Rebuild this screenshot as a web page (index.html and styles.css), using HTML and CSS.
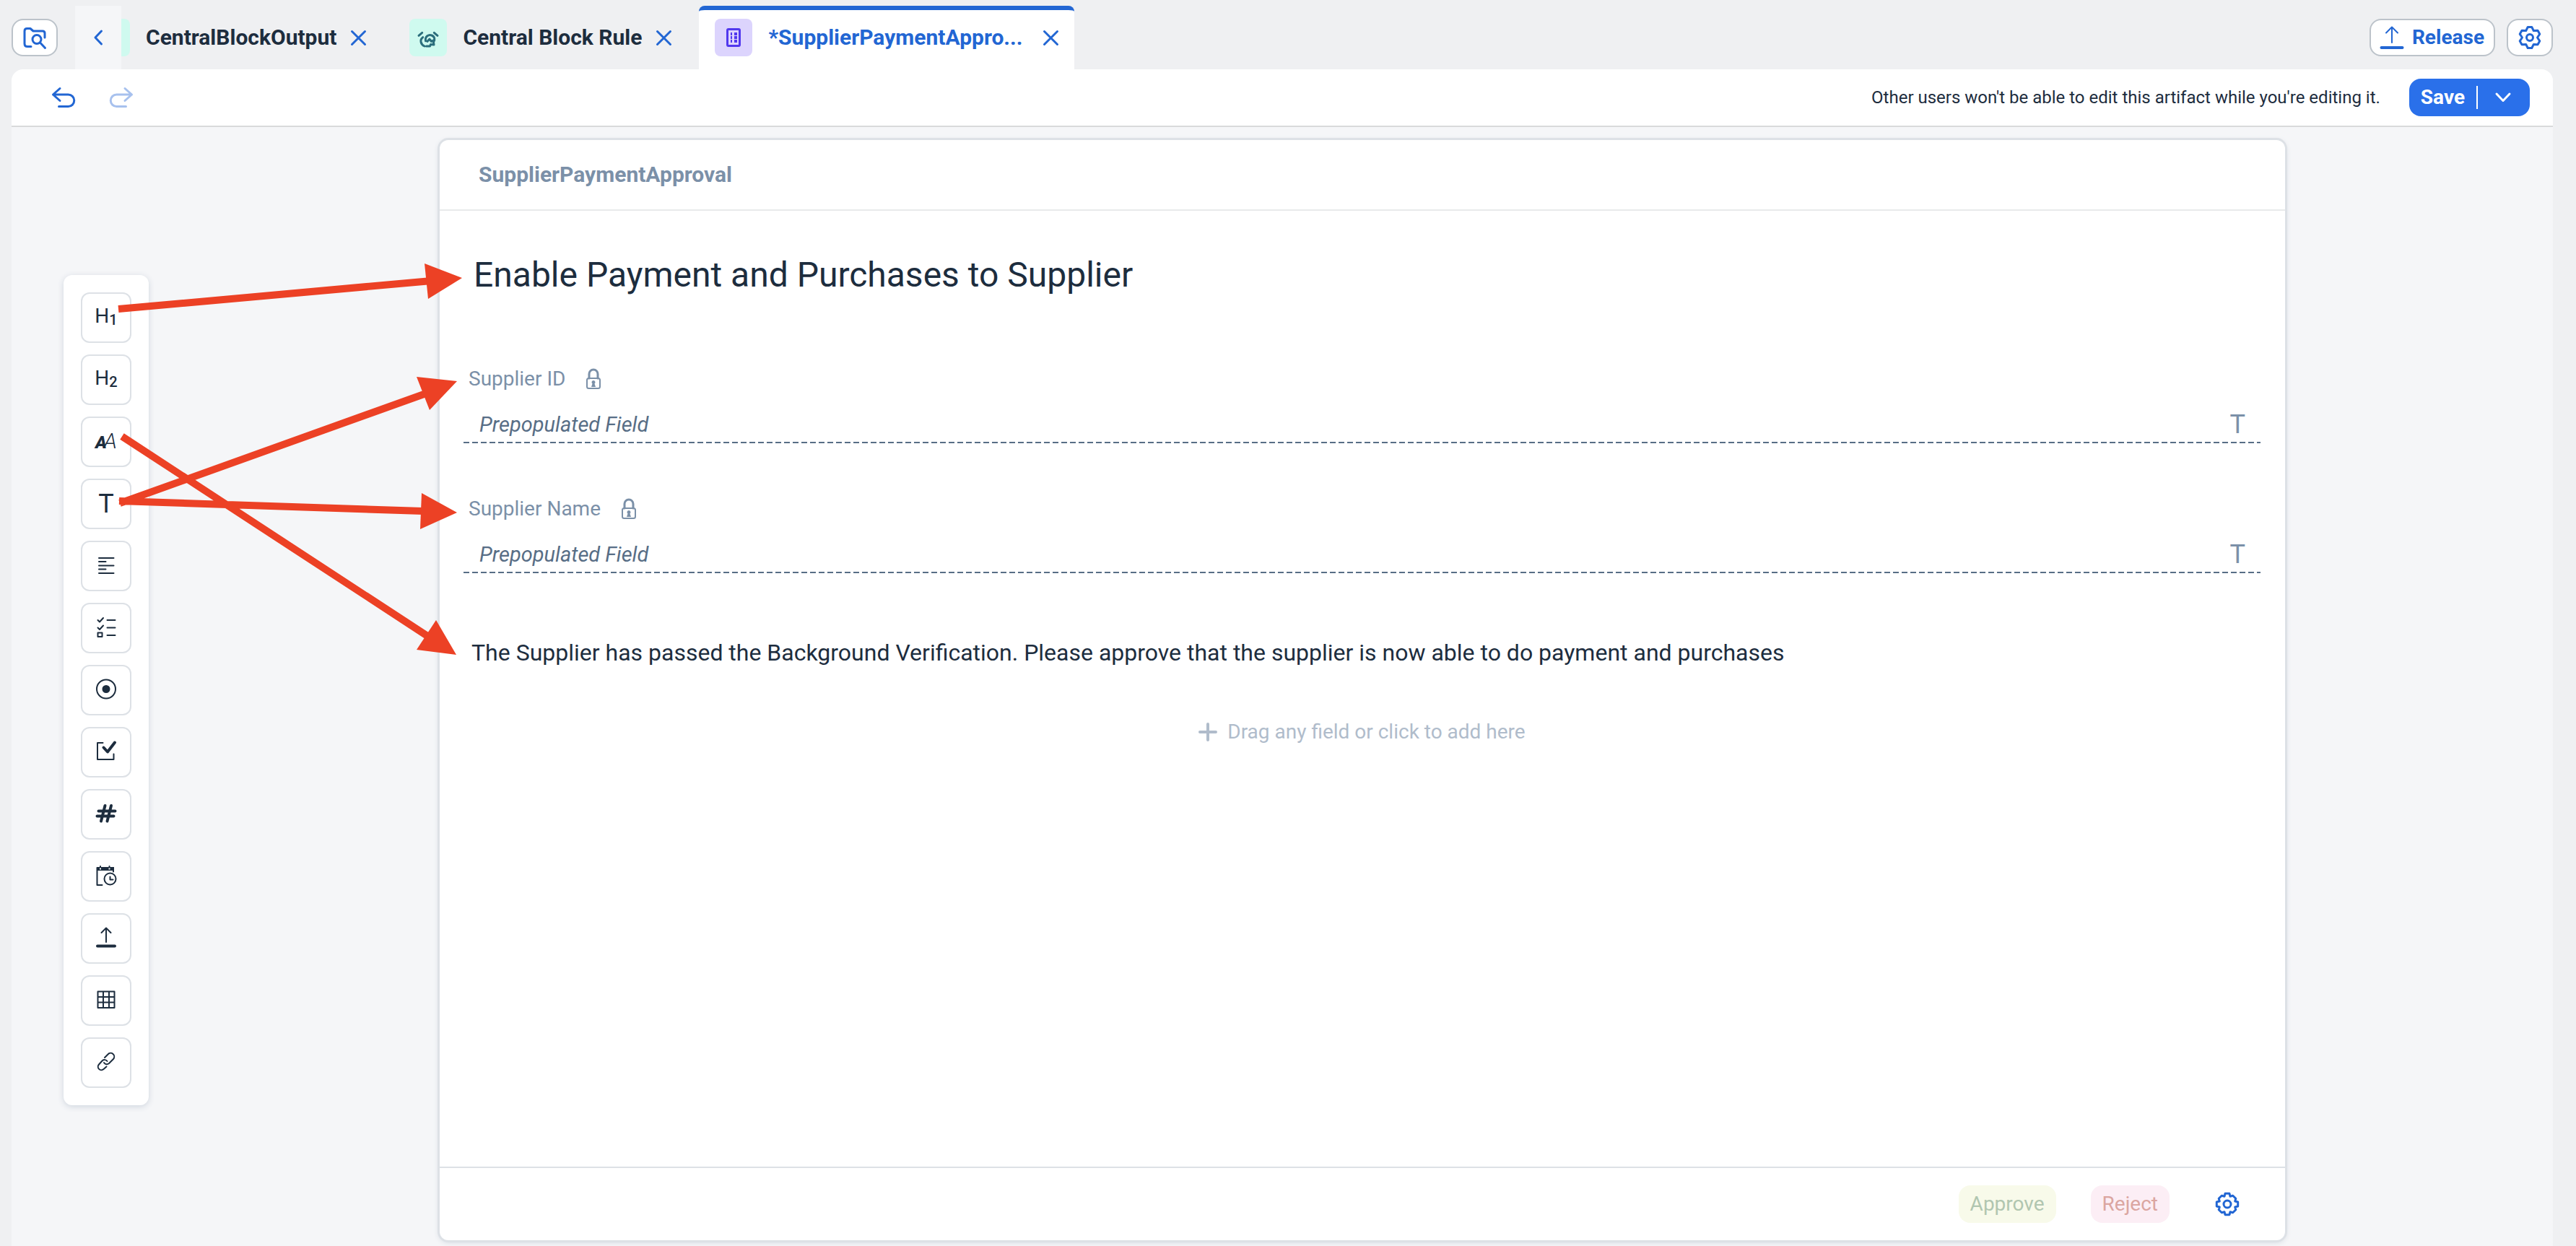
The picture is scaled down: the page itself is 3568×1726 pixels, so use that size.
FILE: index.html
```html
<!DOCTYPE html>
<html lang="en">
<head>
<meta charset="utf-8">
<title>SupplierPaymentApproval</title>
<meta name="viewport" content="width=device-width, initial-scale=1">
<link rel="stylesheet" href="styles.css">
</head>
<body>
<header class="tabbar">
  <button class="box-btn square" aria-label="Browse artifacts">
    <svg class="icon32" viewBox="0 0 32 32"><path d="M11 28.5H6Q2 28.5 2 24.5V7Q2 3.5 5.5 3.5H10L14 7H27Q30 7 30 10V16"/><circle cx="19" cy="18.5" r="6"/><path d="M23.5 23L30.500 30.500"/></svg>
  </button>
  <button class="scroll-btn" aria-label="Previous tabs">
    <svg class="icon32" viewBox="0 0 32 32"><path d="M20.500 7L12 16L20.500 25"/></svg>
  </button>
  <nav class="tabs" aria-label="Open artifacts">
    <div class="tab tab-cut">
      <span class="chip mint chip-cut"></span>
      <a class="tab-label" href="#output">CentralBlockOutput</a>
      <button class="close" aria-label="Close CentralBlockOutput"><svg viewBox="0 0 21 21"><path d="M1.500 1.500L19.500 19.500M19.500 1.500L1.500 19.500"/></svg></button>
    </div>
    <div class="tab">
      <span class="chip mint"><svg class="icon28" viewBox="0 0 28 28"><path d="M1 11.300L5.700 7.300M22.300 7.300L27 11.300M6.700 13.700C2 17 3.500 23.500 9 26M10.500 18.700C9.500 12 15 9.500 19 11C23 12.500 24 17 21.500 20.500L22 24L17.500 23.500L16.500 26H11.500M12.800 19.300L16 16.200L18.500 19.500L21 18"/></svg></span>
      <a class="tab-label" href="#rule">Central Block Rule</a>
      <button class="close" aria-label="Close Central Block Rule"><svg viewBox="0 0 21 21"><path d="M1.500 1.500L19.500 19.500M19.500 1.500L1.500 19.500"/></svg></button>
    </div>
    <div class="tab active">
      <span class="chip violet"><svg class="icon28" viewBox="0 0 28 28"><rect x="5.500" y="2.500" width="17" height="23" rx="1.500"/><path class="dots" d="M10 9h2M15 9h4M10 14h2M15 14h4M10 19h2M15 19h4"/></svg></span>
      <a class="tab-label" href="#approval" aria-current="page">*SupplierPaymentAppro...</a>
      <button class="close" aria-label="Close SupplierPaymentApproval"><svg viewBox="0 0 21 21"><path d="M1.500 1.500L19.500 19.500M19.500 1.500L1.500 19.500"/></svg></button>
    </div>
  </nav>
  <div class="tabbar-actions">
    <button class="box-btn release">
      <svg class="icon32" viewBox="0 0 32 32"><path d="M16 23V2M8 9.500L16 1.500L24 9.500"/><path class="thick" d="M1.500 30H30.500"/></svg>
      Release
    </button>
    <button class="box-btn square" aria-label="Settings">
      <svg class="icon32" viewBox="0 0 32 32"><path d="M13.200 1.500H18.800L21.300 6.600L27 6.300L29.800 11.200L26.500 16L29.800 20.800L27 25.700L21.300 25.400L18.800 30.500H13.200L10.700 25.400L5 25.700L2.200 20.800L5.500 16L2.200 11.200L5 6.300L10.700 6.600Z"/><circle cx="16" cy="16" r="4.500"/></svg>
    </button>
  </div>
</header>

<main class="editor">
  <div class="toolbar">
    <button class="flat" aria-label="Undo"><svg class="icon32" viewBox="0 0 32 32"><path d="M11 3.500L1.500 12L11 20.500M1.500 12H22.500A8 8 0 0 1 22.500 28.500H9.500"/></svg></button>
    <button class="flat" aria-label="Redo" disabled><svg class="icon32" viewBox="0 0 32 32"><path d="M21 3.500L30.500 12L21 20.500M30.500 12H9.500A8 8 0 0 0 9.500 28.500H22.500"/></svg></button>
    <p class="lock-note">Other users won't be able to edit this artifact while you're editing it.</p>
    <div class="save">
      <button class="save-main">Save</button>
      <button class="save-more" aria-label="More save options"><svg viewBox="0 0 22 14"><path d="M2 2L11 11.500L20 2"/></svg></button>
    </div>
  </div>

  <div class="workspace">
    <aside class="palette" aria-label="Form fields">
      <button aria-label="Heading 1"><span class="glyph-h">H<b>1</b></span></button>
      <button aria-label="Heading 2"><span class="glyph-h">H<b>2</b></span></button>
      <button aria-label="Paragraph"><span class="glyph-a"><b>A</b><i>A</i></span></button>
      <button aria-label="Text"><span class="glyph-t">T</span></button>
      <button aria-label="Text area"><svg class="icon28" viewBox="0 0 28 28"><path d="M4 3H24.500M4 8H13.500M4 13.500H24.500M4 18.500H13.500M4 24H24.500"/></svg></button>
      <button aria-label="Choice"><svg class="icon28" viewBox="0 0 28 28"><path d="M2.500 3L5 5.500L10 0M2.500 13.500L5 16L10 10.500M15.500 3H26.500M15.500 13.500H26.500M15.500 24H26.500"/><path d="M2.500 20.500H8.500V26H2.500Z"/></svg></button>
      <button aria-label="Radio button"><svg class="icon28" viewBox="0 0 28 28"><circle cx="14" cy="12.500" r="13"/><circle class="solid" cx="14" cy="12.500" r="4.500"/></svg></button>
      <button aria-label="Checkbox"><svg class="icon28" viewBox="0 0 28 28"><path d="M9.500 1H2V24H24.500V16.500"/><path class="heavy" d="M10.500 7.500L16 13.500L26 .500"/></svg></button>
      <button aria-label="Number"><svg class="icon28" viewBox="0 0 28 28"><path class="heavy" d="M12.500 2L7 23.500M21 2L15.500 23.500M3.500 9.500H26.500M1.500 16.500H24.500"/></svg></button>
      <button aria-label="Date and time"><svg class="icon28" viewBox="0 0 28 28"><path d="M8.500 26H1.500V2H24V7.500M6 0V2M18.500 0V2"/><path class="band" d="M1 1H25V6H1Z"/><path class="pin" d="M6 2.500V4.500M18.500 2.500V4.500"/><circle cx="19.500" cy="17.500" r="8"/><path d="M19.500 14.500V18.500H23.500"/></svg></button>
      <button aria-label="File upload"><svg class="icon28" viewBox="0 0 28 28"><path d="M14 19V0M7.500 6L14 -.500L20.500 6"/><path class="heavy" d="M2 24.500H26"/></svg></button>
      <button aria-label="Table"><svg class="icon28" viewBox="0 0 28 28"><path d="M2.500 1.500H25.500V24H2.500ZM10 1.500V24M18 1.500V24M2.500 9H25.500M2.500 16.500H25.500"/></svg></button>
      <button aria-label="Link"><svg class="icon28" viewBox="0 0 28 28"><path d="M12 7L16.500 2.500A4.600 4.600 0 0 1 24 9L18 15A4.600 4.600 0 0 1 11 14M15.500 12A4.600 4.600 0 0 0 9 11L4 16.500A4.600 4.600 0 0 0 10.500 23L14.500 19.500"/></svg></button>
    </aside>

    <section class="form-card">
      <h2 class="form-name">SupplierPaymentApproval</h2>
      <div class="form-body">
        <h1 class="heading">Enable Payment and Purchases to Supplier</h1>
        <div class="field">
          <label class="field-label" for="supplier-id">Supplier ID
            <svg class="lock" viewBox="0 0 22 30"><path d="M5 14V8A6 6 0 0 1 17 8V14"/><rect x="2" y="14" width="18" height="14" rx="2.500"/><path class="keyhole" d="M11 17a2.500 2.500 0 0 1 1.500 4.500L14 26H8L9.500 21.500A2.500 2.500 0 0 1 11 17Z"/></svg>
          </label>
          <div class="field-line"><input id="supplier-id" type="text" value="Prepopulated Field" readonly><span class="glyph-t">T</span></div>
        </div>
        <div class="field">
          <label class="field-label" for="supplier-name">Supplier Name
            <svg class="lock" viewBox="0 0 22 30"><path d="M5 14V8A6 6 0 0 1 17 8V14"/><rect x="2" y="14" width="18" height="14" rx="2.500"/><path class="keyhole" d="M11 17a2.500 2.500 0 0 1 1.500 4.500L14 26H8L9.500 21.500A2.500 2.500 0 0 1 11 17Z"/></svg>
          </label>
          <div class="field-line"><input id="supplier-name" type="text" value="Prepopulated Field" readonly><span class="glyph-t">T</span></div>
        </div>
        <p class="paragraph">The Supplier has passed the Background Verification. Please approve that the supplier is now able to do payment and purchases</p>
        <button class="add-field"><svg viewBox="0 0 26 26"><path d="M13 2V24M2 13H24"/></svg>Drag any field or click to add here</button>
      </div>
      <footer class="form-footer">
        <button class="decision approve" disabled>Approve</button>
        <button class="decision reject" disabled>Reject</button>
        <button class="footer-gear" aria-label="Form settings">
          <svg class="icon32" viewBox="0 0 32 32"><path d="M13 1.300H19L20 5.300L23.700 4.200L27.800 8.300L26.700 12L30.700 13V19L26.700 20L27.800 23.700L23.700 27.800L20 26.700L19 30.700H13L12 26.700L8.300 27.800L4.200 23.700L5.300 20L1.300 19V13L5.300 12L4.200 8.300L8.300 4.200L12 5.300Z"/><circle cx="16" cy="16" r="5"/></svg>
        </button>
      </footer>
    </section>
  </div>
</main>

<!-- Annotation arrows laid over the editor -->
<svg class="arrows" viewBox="0 0 700 940" aria-hidden="true">
  <path d="M164 428L592 389.500M166 697L590 545M165 694L586 708M169 604.500L592 881"/>
  <polygon points="588,365 640,385 593,414"/>
  <polygon points="577,522 633,528 595,568"/>
  <polygon points="584,683 633,710 582,733"/>
  <polygon points="604,859 632,907 577,900"/>
</svg>
</body>
</html>
```
FILE: styles.css
```css
:root {
  --ink: #1d2d3e;
  --blue: #2266d3;
  --line: #dde1e6;
  --muted: #7b90a8;
  --field: #586e86;
}

* { box-sizing: border-box; }

body {
  position: relative;
  display: flex;
  flex-direction: column;
  min-height: 100vh;
  margin: 0;
  background: #eff0f2;
  color: var(--ink);
  font: 28px/36px Roboto, "Liberation Sans", sans-serif;
}

h1, h2, p { margin: 0; }

button {
  display: flex;
  align-items: center;
  justify-content: center;
  padding: 0;
  border: 0;
  background: none;
  color: var(--blue);
  font: inherit;
  cursor: pointer;
}

svg {
  flex: none;
  overflow: visible;
  fill: none;
  stroke: currentColor;
  stroke-width: 3;
  stroke-linecap: round;
  stroke-linejoin: round;
}

.icon32 { width: 32px; height: 32px; }
.icon28 { width: 28px; height: 28px; }
.thick { stroke-width: 4; }

/* Tab bar */
.tabbar {
  display: flex;
  align-items: center;
  height: 96px;
  padding: 8px 32px 0 16px;
}

.box-btn {
  height: 52px;
  border: 2px solid #bcc3ca;
  border-radius: 16px;
  background: #fff;
  font-weight: 700;
}

.square { width: 64px; }
.release { gap: 12px; padding: 0 13px; }
.release .icon32 { stroke-width: 2; }
.release .thick { stroke-width: 4; }

.scroll-btn {
  width: 64px;
  height: 88px;
  margin-left: 24px;
  background: #f5f6f8;
}

.tabs { display: flex; flex: 1; gap: 16px; }

.tab {
  display: flex;
  align-items: center;
  height: 88px;
  padding: 0 22px;
}

.tab-cut { padding-left: 0; }

.chip {
  display: flex;
  align-items: center;
  justify-content: center;
  width: 52px;
  height: 52px;
  border-radius: 8px;
}

.chip-cut { width: 12px; border-radius: 0 8px 8px 0; }
.mint { background: #cffaef; color: #2b6e7c; }
.violet { background: #dcd4fd; color: #5138ee; }
.dots { stroke-linecap: butt; stroke-width: 4; }

.tab-label {
  margin: 0 20px 0 22px;
  color: var(--ink);
  font-size: 30px;
  font-weight: 700;
  text-decoration: none;
  white-space: nowrap;
}

.close svg { display: block; width: 21px; height: 21px; }

.active {
  width: 520px;
  border-top: 6px solid var(--blue);
  border-radius: 8px 8px 0 0;
  padding-bottom: 6px;
  background: #fff;
}

.active .tab-label { flex: 1; color: var(--blue); }

.tabbar-actions { display: flex; gap: 16px; }

/* Editor frame and toolbar */
.editor {
  display: flex;
  flex: 1;
  flex-direction: column;
  margin: 0 32px 0 16px;
  border-radius: 16px 16px 0 0;
  background: #f5f6f8;
}

.toolbar {
  display: flex;
  align-items: center;
  height: 80px;
  padding: 0 32px 0 56px;
  border-bottom: 2px solid #d9dadb;
  border-radius: 16px 16px 0 0;
  background: #fff;
}

.flat { margin-right: 48px; }
.flat:disabled { color: #a7c1ee; }

.lock-note {
  flex: 1;
  margin-right: 40px;
  font-size: 24px;
  text-align: right;
}

.save {
  display: flex;
  align-items: center;
  height: 52px;
  border-radius: 16px;
  background: #2a70ea;
}

.save button { height: 52px; color: #fff; font-weight: 700; }
.save-main { padding: 0 16px; }
.save-more { width: 74px; position: relative; }

.save-more::before {
  content: "";
  position: absolute;
  top: 10px;
  left: 0;
  width: 2px;
  height: 32px;
  background: #fff;
}

.save-more svg { width: 22px; height: 14px; }

/* Workspace */
.workspace {
  display: flex;
  flex: 1;
  align-items: stretch;
  padding: 18px 371px 8px 72px;
}

.palette {
  display: flex;
  flex: none;
  flex-direction: column;
  align-self: flex-start;
  gap: 16px;
  width: 118px;
  margin-top: 187px;
  padding: 24px;
  border-radius: 12px;
  background: #fff;
  box-shadow: 0 2px 8px #cfd5de;
}

.palette button {
  width: 70px;
  height: 70px;
  border: 2px solid var(--line);
  border-radius: 12px;
  color: var(--ink);
}

.palette svg { stroke-width: 2; }
.palette .heavy { stroke-width: 4; }
.palette .solid { fill: currentColor; }
.palette .band { fill: currentColor; stroke: none; }
.palette .pin { stroke: #fff; stroke-linecap: butt; }

.glyph-h { font-size: 28px; line-height: 40px; }
.glyph-h b { font-size: 20px; font-weight: 500; vertical-align: -3px; }
.glyph-a { display: flex; align-items: baseline; }
.glyph-a b { font-size: 24px; font-style: italic; font-weight: 900; }
.glyph-a i { margin-left: -4px; font-size: 30px; font-weight: 300; }
.glyph-t { font-size: 36px; }

.form-card {
  display: flex;
  flex: 1;
  flex-direction: column;
  min-width: 0;
  margin-left: 403px;
  border-radius: 12px;
  background: #fff;
  box-shadow: 0 0 0 3px var(--line), 0 2px 8px #c9d0da;
}

.form-name {
  height: 98px;
  padding: 30px 54px;
  border-bottom: 2px solid #e8eaeb;
  color: var(--muted);
  font-size: 30px;
  line-height: 36px;
}

.form-body { flex: 1; padding: 61px 34px 0 33px; }

.heading {
  padding-left: 14px;
  font-size: 48px;
  font-weight: 400;
  line-height: 56px;
}

.field { margin-top: 73px; }
.heading + .field { margin-top: 98px; }

.field-label {
  display: flex;
  align-items: center;
  gap: 28px;
  height: 36px;
  padding-left: 7px;
  color: var(--muted);
}

.lock { width: 22px; height: 30px; }
.lock rect { stroke-width: 2; }
.lock .keyhole { fill: currentColor; stroke: none; }

.field-line {
  display: flex;
  align-items: center;
  height: 51px;
  margin-top: 20px;
  padding: 0 21px 2px 22px;
  background: repeating-linear-gradient(to right, var(--field) 0 8px, transparent 8px 12px) bottom / 100% 2px no-repeat;
  color: var(--muted);
}

.field-line input {
  flex: 1;
  min-width: 0;
  padding: 0;
  border: 0;
  outline: 0;
  background: none;
  color: var(--field);
  font: italic 29px/36px Roboto, "Liberation Sans", sans-serif;
}

.paragraph {
  margin-top: 90px;
  padding-left: 11px;
  font-size: 32px;
  line-height: 40px;
}

.add-field {
  gap: 14px;
  width: 100%;
  margin-top: 72px;
  color: #b0bccb;
}

.add-field svg { width: 26px; height: 26px; stroke-width: 4; }

.form-footer {
  display: flex;
  align-items: center;
  justify-content: flex-end;
  gap: 48px;
  height: 102px;
  padding-right: 48px;
  border-top: 2px solid var(--line);
}

.decision { height: 52px; padding: 0 16px; border-radius: 16px; }
.approve { background: #f8faea; color: #b1c6b0; }
.reject { background: #fceef5; color: #dba6a1; }
.footer-gear { width: 64px; height: 52px; }

.arrows {
  position: absolute;
  top: 0;
  left: 0;
  width: 700px;
  height: 940px;
  pointer-events: none;
  stroke: #ec4125;
  stroke-linecap: butt;
  stroke-width: 10;
}

.arrows polygon { fill: #ec4125; stroke: none; }
```
